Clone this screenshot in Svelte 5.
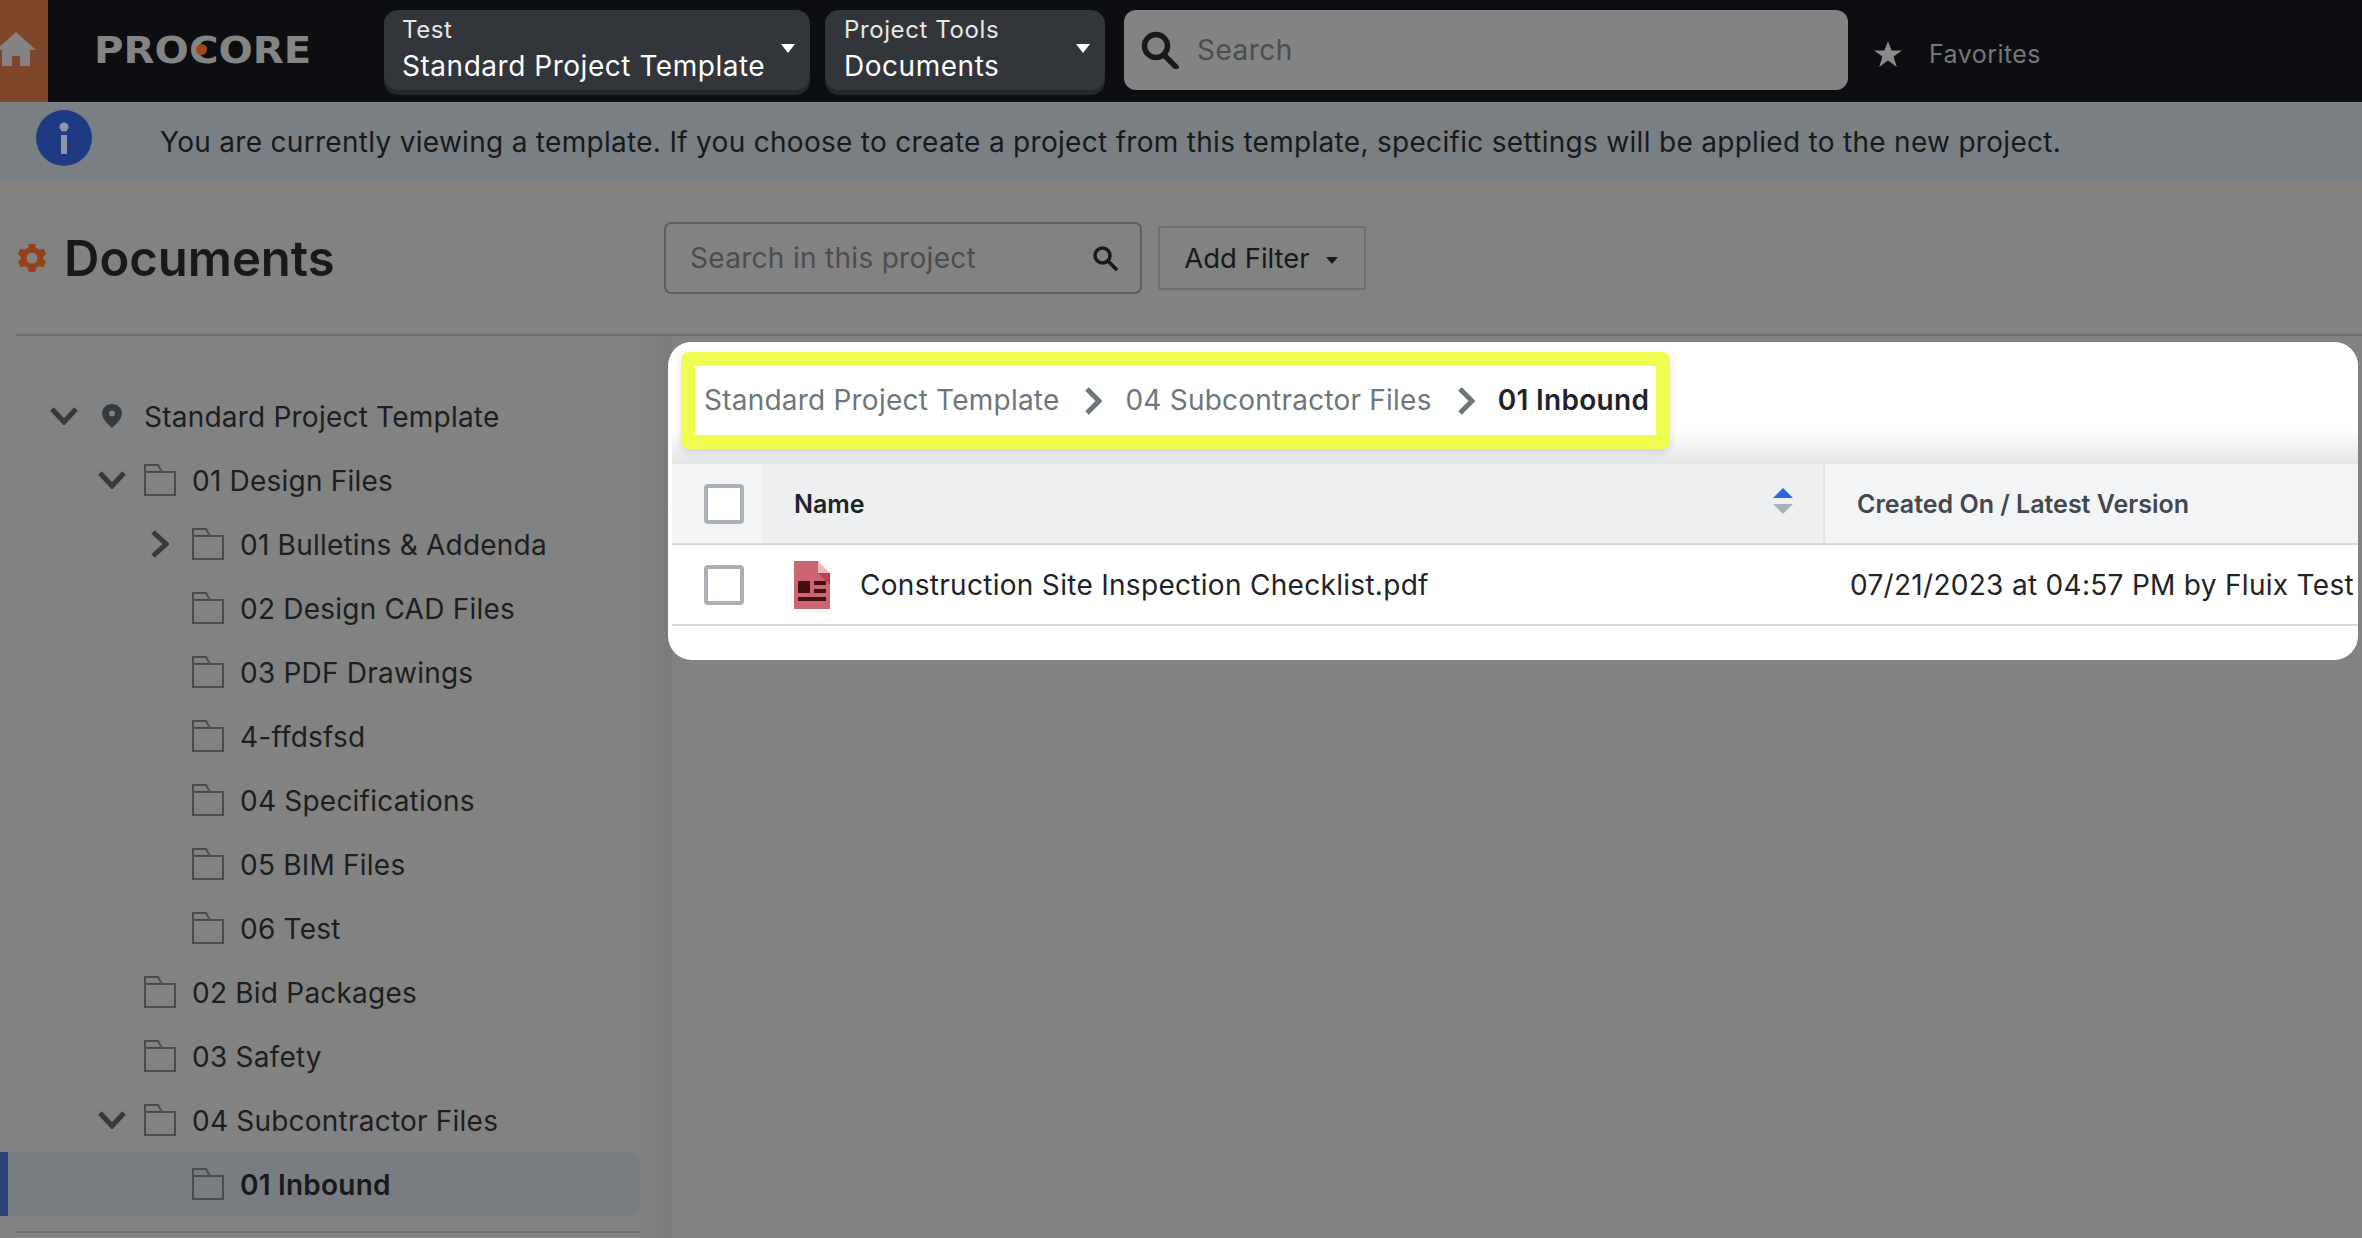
<script lang="ts">
  type Node = { name: string; depth: number; toggle?: 'open' | 'closed'; kind?: 'pin'; active?: boolean }

  const tree: Node[] = [
    { name: 'Standard Project Template', depth: 0, toggle: 'open', kind: 'pin' },
    { name: '01 Design Files', depth: 1, toggle: 'open' },
    { name: '01 Bulletins & Addenda', depth: 2, toggle: 'closed' },
    { name: '02 Design CAD Files', depth: 2 },
    { name: '03 PDF Drawings', depth: 2 },
    { name: '4-ffdsfsd', depth: 2 },
    { name: '04 Specifications', depth: 2 },
    { name: '05 BIM Files', depth: 2 },
    { name: '06 Test', depth: 2 },
    { name: '02 Bid Packages', depth: 1 },
    { name: '03 Safety', depth: 1 },
    { name: '04 Subcontractor Files', depth: 1, toggle: 'open' },
    { name: '01 Inbound', depth: 2, active: true },
  ]
</script>

<div class="page">
  <!-- Top bar -->
  <header class="topbar">
    <div class="home">
      <svg width="36" height="34" viewBox="0 0 36 34"><path d="M16 0 36 18H30V34H20V24H12V34H2V18H-4Z" fill="#838383" /></svg>
    </div>
    <div class="logo">
      <span class="logo-text">PROCORE</span>
      <i class="logo-dot"></i>
    </div>
    <button class="pill project">
      <span class="pill-text"><small>Test</small><b>Standard Project Template</b></span>
      <i class="caret"></i>
    </button>
    <button class="pill tools">
      <span class="pill-text"><small>Project Tools</small><b>Documents</b></span>
      <i class="caret"></i>
    </button>
    <div class="global-search">
      <svg width="40" height="38" viewBox="0 0 40 38" fill="none" stroke="#17191b" stroke-width="5.5">
        <circle cx="16" cy="15" r="11.5" /><path d="M24 24 36 36" stroke-linecap="round" />
      </svg>
      <span>Search</span>
    </div>
    <div class="favorites">
      <svg width="30" height="26" viewBox="0 0 30 26"><path d="M15 0 18.600 9.500H29L20.600 15.600 23.800 26 15 19.600 6.200 26 9.400 15.600 1 9.500H11.400Z" fill="#8a8a8a" /></svg>
      <span>Favorites</span>
    </div>
  </header>

  <!-- Info banner -->
  <div class="banner">
    <svg class="info" width="56" height="56" viewBox="0 0 56 56">
      <circle cx="28" cy="28" r="28" fill="#1e3a82" />
      <circle cx="28" cy="17" r="4.500" fill="#8f97a8" />
      <rect x="25" y="25" width="6" height="19" fill="#8f97a8" />
    </svg>
    <p>You are currently viewing a template. If you choose to create a project from this template, specific settings will be applied to the new project.</p>
  </div>

  <!-- Title row -->
  <div class="titlebar">
    <div class="title">
      <svg width="28" height="28" viewBox="0 0 28 28">
        <path d="M11 0H17L18 4 21.500 5.800 25.500 4.500 28 10 25 13V15L28 18 25.500 23.500 21.500 22.200 18 24 17 28H11L10 24 6.500 22.200 2.500 23.500 0 18 3 15V13L0 10 2.500 4.500 6.500 5.800 10 4Z" fill="#94401a" />
        <circle cx="14" cy="14" r="5.500" fill="#828282" />
      </svg>
      <h1>Documents</h1>
    </div>
    <div class="doc-search">
      <span>Search in this project</span>
      <svg width="26" height="26" viewBox="0 0 26 26" fill="none" stroke="#17191b" stroke-width="3.500">
        <circle cx="10.500" cy="10.500" r="7.500" /><path d="M16 16 24 24" stroke-linecap="round" />
      </svg>
    </div>
    <button class="add-filter">Add Filter <i></i></button>
  </div>

  <div class="content">
    <!-- Folder tree -->
    <aside class="sidebar">
      <ul class="tree">
        {#each tree as node}
          <li class="row depth-{node.depth}" class:active={node.active}>
            <span class="toggle">
              {#if node.toggle === 'open'}
                <svg width="28" height="18" viewBox="0 0 28 18" fill="none" stroke="#343b40" stroke-width="5"><path d="M2 2 14 15 26 2" /></svg>
              {:else if node.toggle === 'closed'}
                <svg width="18" height="28" viewBox="0 0 18 28" fill="none" stroke="#343b40" stroke-width="5"><path d="M2 2 15 14 2 26" /></svg>
              {/if}
            </span>
            {#if node.kind === 'pin'}
              <svg class="node-icon" width="32" height="24" viewBox="0 0 32 24">
                <path fill-rule="evenodd" d="M16 0C21.500 0 26 4 26 9.500 26 15 19 21 16 24 13 21 6 15 6 9.500 6 4 10.500 0 16 0ZM16 6.500A3 3 0 1 0 16 12.500 3 3 0 1 0 16 6.500Z" fill="#343b40" />
              </svg>
            {:else}
              <svg class="node-icon" width="32" height="32" viewBox="0 0 32 32" fill="none" stroke="#4a4c4e" stroke-width="2">
                <path d="M1 31V1H14L18 8H31V31ZM1 8H18" />
              </svg>
            {/if}
            <span class="label">{node.name}</span>
          </li>
        {/each}
      </ul>
      <hr />
    </aside>

    <main class="main">
      <section class="card">
        <div class="crumb-area">
          <nav class="crumbs">
            <span>Standard Project Template</span>
            <svg width="18" height="28" viewBox="0 0 18 28" fill="none" stroke="#6d767c" stroke-width="5"><path d="M3 2 15 14 3 26" /></svg>
            <span>04 Subcontractor Files</span>
            <svg width="18" height="28" viewBox="0 0 18 28" fill="none" stroke="#6d767c" stroke-width="5"><path d="M3 2 15 14 3 26" /></svg>
            <strong>01 Inbound</strong>
          </nav>
        </div>

        <div class="table">
          <div class="thead">
            <div class="cell-check"><span class="checkbox"></span></div>
            <div class="th-name">
              <span>Name</span>
              <span class="sort"><i class="up"></i><i class="down"></i></span>
            </div>
            <div class="th-date">Created On / Latest Version</div>
          </div>
          <div class="tr">
            <div class="cell-check"><span class="checkbox"></span></div>
            <div class="td-name">
              <svg width="36" height="48" viewBox="0 0 36 48">
                <path d="M0 0H24L36 18V48H0Z" fill="#cc6472" />
                <path d="M24 0 36 12H24Z" fill="#e8b8be" />
                <path d="M24 12H36V24Z" fill="#c23c4c" />
                <path d="M4 20H16V32H4ZM20 20H32V24H20ZM20 28H32V32H20ZM4 36H32V40H4Z" fill="#431010" />
              </svg>
              <span>Construction Site Inspection Checklist.pdf</span>
            </div>
            <div class="td-date">07/21/2023 at 04:57 PM by Fluix Test</div>
          </div>
        </div>
      </section>
    </main>
  </div>
</div>

<style>
  :global(body) {
    margin: 0;
    background: #828282;
  }

  .page {
    width: 2362px;
    height: 1238px;
    overflow: hidden;
    display: flex;
    flex-direction: column;
    font-family: Inter, 'Liberation Sans', sans-serif;
    color: #1c1e20;
  }

  /* Top bar */
  .topbar {
    height: 102px;
    flex: none;
    background: #0c0e11;
    display: flex;
    align-items: flex-start;
  }

  .home {
    width: 48px;
    height: 102px;
    flex: none;
    background: #7d462b;
    padding-top: 32px;
    box-sizing: border-box;
    overflow: hidden;
  }

  .home svg {
    display: block;
    overflow: visible;
  }

  .logo {
    position: relative;
    width: 212px;
    margin: 0 78px 0 46px;
    height: 102px;
    display: flex;
    align-items: center;
    flex: none;
  }

  .logo-text {
    font-family: 'DejaVu Sans', sans-serif;
    font-weight: 700;
    font-size: 37px;
    line-height: 1;
    color: #848484;
    white-space: nowrap;
    margin-top: -2px;
    transform: scaleX(1.09);
    transform-origin: left center;
  }

  .logo-dot {
    position: absolute;
    left: 102px;
    top: 44px;
    width: 11px;
    height: 11px;
    border-radius: 50%;
    background: #a2451a;
  }

  .pill {
    margin-top: 10px;
    height: 80px;
    border: 0;
    border-radius: 14px;
    background: #32363a;
    box-shadow: 0 5px 0 #23262a;
    color: #fff;
    font: inherit;
    padding: 0 0 0 18px;
    display: flex;
    align-items: center;
    flex: none;
    text-align: left;
    position: relative;
  }

  .pill.project {
    width: 426px;
    margin-right: 15px;
  }

  .pill.tools {
    width: 280px;
    margin-right: 19px;
  }

  .pill.tools .pill-text {
    margin-left: 1px;
  }

  .pill-text {
    display: flex;
    flex-direction: column;
    gap: 2px;
    margin-top: -2px;
  }

  .pill-text small {
    font-size: 24px;
    line-height: 32px;
    letter-spacing: 0.6px;
    color: #e6e6e6;
  }

  .pill-text b {
    font-weight: 400;
    font-size: 28px;
    line-height: 36px;
    letter-spacing: 0.53px;
    white-space: nowrap;
  }

  .caret {
    position: absolute;
    right: 15px;
    top: 34px;
    border-left: 7px solid transparent;
    border-right: 7px solid transparent;
    border-top: 9px solid #fff;
  }

  .global-search {
    margin-top: 10px;
    width: 724px;
    height: 80px;
    border-radius: 12px;
    background: #838383;
    display: flex;
    align-items: center;
    gap: 17px;
    padding-left: 16px;
    box-sizing: border-box;
    font-size: 28px;
    letter-spacing: 0.5px;
    color: #4a4d50;
    flex: none;
  }

  .favorites {
    margin: 39px 0 0 25px;
    display: flex;
    align-items: center;
    gap: 26px;
    font-size: 25px;
    letter-spacing: 0.45px;
    color: #777;
  }

  /* Banner */
  .banner {
    height: 80px;
    flex: none;
    background: #7a7f84;
    display: flex;
    align-items: center;
    padding-left: 36px;
    box-sizing: border-box;
  }

  .info {
    flex: none;
    margin-right: 68px;
    margin-top: -8px;
  }

  .banner p {
    margin: 0;
    font-size: 28px;
    letter-spacing: 0.3px;
    white-space: nowrap;
    color: #17191b;
  }

  /* Title row */
  .titlebar {
    height: 154px;
    flex: none;
    margin-left: 16px;
    border-bottom: 2px solid #6e6e6e;
    box-sizing: border-box;
    display: flex;
    align-items: center;
  }

  .title {
    width: 648px;
    display: flex;
    align-items: center;
    gap: 18px;
    flex: none;
    padding-left: 2px;
    box-sizing: border-box;
  }

  .title h1 {
    margin: 0;
    font-size: 49px;
    font-weight: 600;
    color: #17191b;
  }

  .doc-search {
    width: 478px;
    height: 72px;
    flex: none;
    border: 2.5px solid #5b5f63;
    border-radius: 7px;
    box-sizing: border-box;
    display: flex;
    align-items: center;
    justify-content: space-between;
    padding: 0 22px 0 24px;
    font-size: 28px;
    letter-spacing: 0.3px;
    color: #4a4d50;
  }

  .add-filter {
    margin-left: 16px;
    width: 208px;
    height: 64px;
    border: 2px solid #6e6e6e;
    border-radius: 3px;
    background: transparent;
    font: inherit;
    font-size: 27.5px;
    color: #17191b;
    display: flex;
    align-items: center;
    justify-content: center;
    gap: 16px;
    padding: 0 2px 0 0;
  }

  .add-filter i {
    border-left: 6px solid transparent;
    border-right: 6px solid transparent;
    border-top: 7px solid #17191b;
    margin-top: 4px;
  }

  /* Content */
  .content {
    flex: 1;
    display: flex;
    min-height: 0;
  }

  .sidebar {
    width: 672px;
    flex: none;
    padding: 48px 32px 0 0;
    box-sizing: border-box;
    background: linear-gradient(to right, transparent 640px, #7a7a7a 672px);
  }

  .sidebar hr {
    margin: 15px 0 0 16px;
    border: 0;
    border-top: 2px solid #707070;
  }

  .tree {
    list-style: none;
    margin: 0;
    padding: 0;
  }

  .row {
    height: 64px;
    display: flex;
    align-items: center;
    font-size: 28px;
    letter-spacing: 0.22px;
    white-space: nowrap;
    color: #1c1e20;
    border-radius: 0 8px 8px 0;
  }

  .label {
    margin-top: 1px;
  }

  .toggle {
    width: 40px;
    margin-right: 12px;
    display: flex;
    justify-content: center;
    flex: none;
  }

  .node-icon {
    flex: none;
    margin-right: 16px;
  }

  .row.depth-0 { padding-left: 44px; }
  .row.depth-1 { padding-left: 92px; }
  .row.depth-2 { padding-left: 140px; }
  .row.depth-0 .node-icon { margin-right: 16px; }

  .row.active {
    background: #797d82;
    border-left: 8px solid #2f4477;
    padding-left: 132px;
    font-weight: 600;
    color: #17191b;
  }

  .main {
    flex: 1;
    min-width: 0;
  }

  /* Highlighted card */
  .card {
    margin: 6px 4px 0 -4px;
    height: 318px;
    background: #fff;
    border-radius: 24px;
    overflow: hidden;
    position: relative;
    padding-left: 4px;
    box-sizing: border-box;
  }

  .crumb-area {
    height: 122px;
    padding: 10px 0 0 9px;
    box-sizing: border-box;
    background: linear-gradient(to bottom, #fff 88px, #e4e4e4 122px);
  }

  .crumbs {
    width: 989px;
    height: 97px;
    box-sizing: border-box;
    background: #fff;
    border: 14px solid #f0fd50;
    border-radius: 8px;
    box-shadow: 0 3px 8px rgba(0, 0, 0, 0.12);
    display: flex;
    align-items: center;
    padding-left: 9px;
    font-size: 28px;
    letter-spacing: 0.22px;
    color: #6d767c;
    white-space: nowrap;
  }

  .crumbs span,
  .crumbs strong {
    margin-top: -2px;
  }

  .crumbs svg {
    margin: 0 23px 0 25px;
    flex: none;
  }

  .crumbs strong {
    font-weight: 600;
    color: #1f2428;
    letter-spacing: 0.3px;
  }

  .thead,
  .tr {
    display: flex;
    height: 81px;
    box-sizing: border-box;
    border-bottom: 2px solid #d6dadd;
    align-items: stretch;
  }

  .tr {
    font-size: 28px;
    letter-spacing: 0.3px;
    color: #1f2428;
    white-space: nowrap;
  }

  .cell-check {
    width: 90px;
    flex: none;
    display: flex;
    align-items: center;
    padding-left: 32px;
    box-sizing: border-box;
  }

  .thead .cell-check {
    background: #f4f5f6;
  }

  .checkbox {
    width: 40px;
    height: 40px;
    box-sizing: border-box;
    border: 4px solid #a9afb5;
    border-radius: 4px;
    background: #fff;
  }

  .th-name {
    width: 1063px;
    flex: none;
    background: #eeeff1;
    border-right: 2px solid #e3e5e7;
    box-sizing: border-box;
    display: flex;
    align-items: center;
    justify-content: space-between;
    padding: 0 30px 0 32px;
    font-size: 25px;
    font-weight: 600;
    color: #1f2428;
  }

  .sort {
    display: flex;
    flex-direction: column;
    gap: 6px;
    margin-bottom: 6px;
  }

  .sort i {
    display: block;
    border-left: 10px solid transparent;
    border-right: 10px solid transparent;
  }

  .sort .up { border-bottom: 10px solid #2f63e0; }
  .sort .down { border-top: 10px solid #a9afb5; }

  .th-date {
    flex: 1;
    background: #f3f4f6;
    display: flex;
    align-items: center;
    padding-left: 32px;
    font-size: 25px;
    font-weight: 600;
    color: #42484d;
    white-space: nowrap;
  }

  .td-name {
    width: 1062px;
    flex: none;
    display: flex;
    align-items: center;
    gap: 30px;
    padding-left: 32px;
    box-sizing: border-box;
  }

  .td-date {
    flex: 1;
    display: flex;
    align-items: center;
    padding-left: 26px;
  }
</style>
